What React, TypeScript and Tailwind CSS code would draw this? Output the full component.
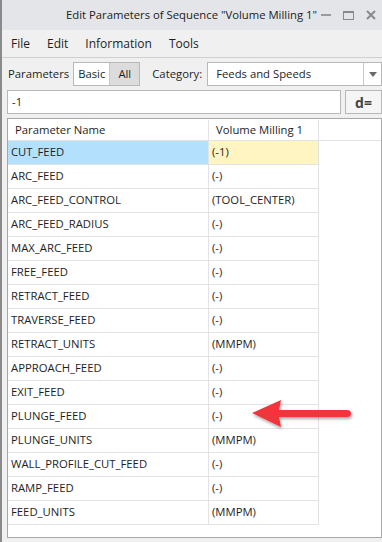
const rows: [string, string][] = [
  ['CUT_FEED', '(-1)'],
  ['ARC_FEED', '(-)'],
  ['ARC_FEED_CONTROL', '(TOOL_CENTER)'],
  ['ARC_FEED_RADIUS', '(-)'],
  ['MAX_ARC_FEED', '(-)'],
  ['FREE_FEED', '(-)'],
  ['RETRACT_FEED', '(-)'],
  ['TRAVERSE_FEED', '(-)'],
  ['RETRACT_UNITS', '(MMPM)'],
  ['APPROACH_FEED', '(-)'],
  ['EXIT_FEED', '(-)'],
  ['PLUNGE_FEED', '(-)'],
  ['PLUNGE_UNITS', '(MMPM)'],
  ['WALL_PROFILE_CUT_FEED', '(-)'],
  ['RAMP_FEED', '(-)'],
  ['FEED_UNITS', '(MMPM)'],
]

export default function App() {
  return (
    <div
      className="relative w-[382px] h-[542px] overflow-hidden bg-[#f0f0f0] text-[#1e1e1e] border-l-2 border-[#8a8a8a] flex flex-col"
      style={{ fontFamily: '"Open Sans", "Noto Sans", sans-serif' }}
    >
      {/* Title bar */}
      <div className="h-[30px] bg-[#e3e5e8] flex items-center shrink-0">
        <div className="flex-1 text-right pr-[4px] text-[11.3px] text-[#222]">
          Edit Parameters of Sequence "Volume Milling 1"
        </div>
        <div className="flex items-center gap-[12px] pr-[6px] text-[#8a8a8a]">
          <span className="w-[10px] h-[2px] bg-[#9a9a9a]" />
          <span className="w-[11px] h-[9px] border-[1.5px] border-[#8a8a8a] border-t-[2.5px]" />
          <svg width="10" height="10" viewBox="0 0 10 10">
            <path d="M1 1 L9 9 M9 1 L1 9" stroke="#8a8a8a" strokeWidth="2" />
          </svg>
        </div>
      </div>

      {/* Menu */}
      <div className="h-[28px] flex items-center gap-[17px] pl-[9px] text-[12px] border-b border-[#d0d0d0] shrink-0">
        <span>File</span>
        <span>Edit</span>
        <span>Information</span>
        <span>Tools</span>
      </div>

      {/* Parameters / Category */}
      <div className="flex items-center h-[26px] mt-[3px] pl-[6px] text-[11.3px] shrink-0">
        <span className="mr-[4px]">Parameters</span>
        <div className="flex h-[24px] border border-[#b8b8b8]">
          <span className="px-[4px] flex items-center bg-white">Basic</span>
          <span className="px-[8px] flex items-center bg-[#dcdcdc] border-l border-[#c8c8c8]">All</span>
        </div>
        <span className="ml-[12px] mr-[5px]">Category:</span>
        <div className="flex-1 h-[24px] bg-white border border-[#b8b8b8] flex items-center">
          <span className="flex-1 pl-[8px]">Feeds and Speeds</span>
          <div className="w-[18px] h-full border-l border-[#c8c8c8] flex items-center justify-center">
            <svg width="8" height="5" viewBox="0 0 8 5">
              <path d="M0 0 H8 L4 5 Z" fill="#6a6a6a" />
            </svg>
          </div>
        </div>
      </div>

      {/* Value input */}
      <div className="flex items-center gap-[4px] h-[24px] mt-[3px] pl-[5px] shrink-0">
        <div className="flex-1 h-full bg-white border border-[#b8b8b8] flex items-center pl-[4px] text-[11.3px]">
          -1
        </div>
        <div className="w-[37px] h-full bg-[#f5f5f5] border border-[#b8b8b8] flex items-center justify-center text-[14px] font-bold text-[#444]">
          d=
        </div>
      </div>

      {/* Table */}
      <div className="flex-1 mt-[4px] ml-[5px] mb-[4px] bg-white border border-[#a8a8a8] text-[11.3px] overflow-hidden">
        <div className="flex h-[21px] border-b border-[#e3e3e3] mt-[1px]">
          <div className="w-[201px] pl-[7px] flex items-center border-r border-[#e3e3e3]">Parameter Name</div>
          <div className="w-[110px] pl-[7px] flex items-center border-r border-[#e3e3e3]">Volume Milling 1</div>
        </div>
        {rows.map(([name, value], i) => (
          <div key={name} className="flex h-[24px]">
            <div
              className={`w-[201px] pl-[3px] flex items-center border-r border-b border-[#e3e3e3] ${
                i === 0 ? 'bg-[#b3e1fd]' : ''
              }`}
            >
              {name}
            </div>
            <div
              className={`w-[110px] pl-[3px] flex items-center border-r border-b border-[#e3e3e3] ${
                i === 0 ? 'bg-[#fff5c2]' : ''
              }`}
            >
              {value}
            </div>
          </div>
        ))}
      </div>

      {/* Red annotation arrow */}
      <svg
        className="absolute left-[244px] top-[396px]"
        width="112"
        height="38"
        viewBox="0 0 112 38"
      >
        <defs>
          <filter id="sh" x="-20%" y="-40%" width="140%" height="180%">
            <feDropShadow dx="1" dy="2" stdDeviation="1.5" floodColor="#000" floodOpacity="0.35" />
          </filter>
        </defs>
        <g filter="url(#sh)">
          <path d="M6 17 L35 4 L33 14 L101 14 Q105 14 105 17.5 Q105 21 101 21 L33 21 L35 31 Z" fill="#f0363c" />
        </g>
      </svg>
    </div>
  )
}
